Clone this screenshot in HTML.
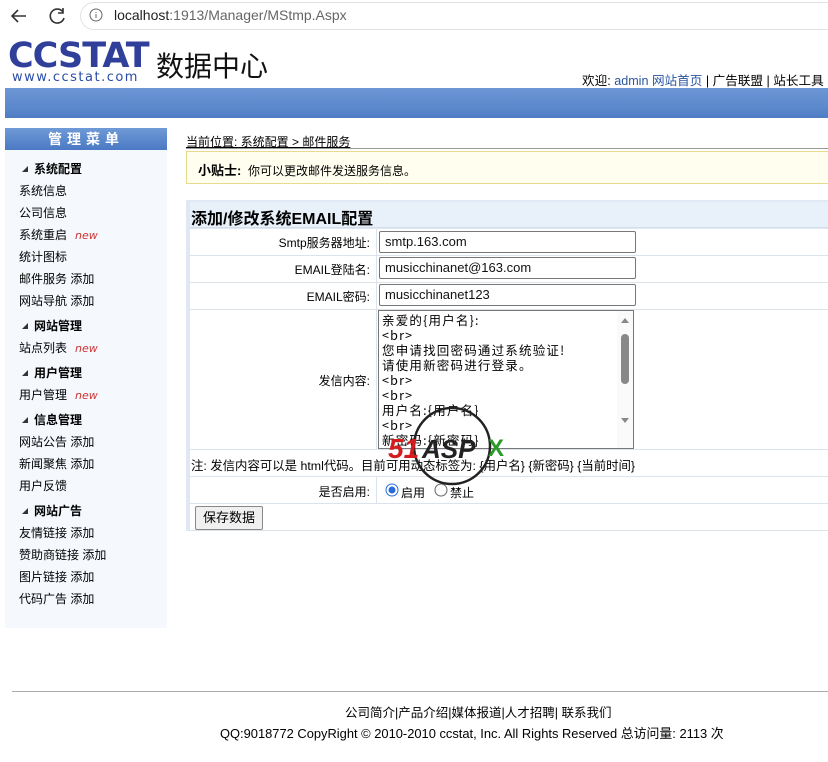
<!DOCTYPE html>
<html><head><meta charset="utf-8"><style>
*{margin:0;padding:0;box-sizing:border-box}
body{width:828px;height:762px;background:#fff;font-family:"Liberation Sans","Noto Sans CJK SC",sans-serif;font-size:12px;color:#000;position:relative;overflow:hidden}
.a{position:absolute;white-space:nowrap}
.cjk{font-family:"Noto Sans CJK SC",sans-serif}
.side div{position:absolute;left:19px;font-size:12px}
.side .h{left:22px;font-weight:bold}
.side .h:before{content:"";display:inline-block;border-left:6px solid transparent;border-bottom:6px solid #333;margin-right:6px;vertical-align:1px}
.new{color:#c33;font-style:italic;font-family:"DejaVu Sans",sans-serif;font-size:11px;margin-left:8px}
.row{position:absolute;left:190px;width:638px;border-bottom:1px solid #dde3ea;background:#fff}
.inp{position:absolute;left:379px;width:257px;height:22px;border:1px solid #777;border-radius:2px;padding-left:5px;font-size:13px;line-height:20px;color:#111}
</style></head><body>
<div class="a" style="left:0;top:0;width:828px;height:31px;background:#fff"></div>
<svg class="a" style="left:9px;top:6px" width="60" height="20" viewBox="0 0 60 20"><path d="M17 10H3M9 4L3 10l6 6" fill="none" stroke="#333" stroke-width="1.6"/><path d="M54 6a7 7 0 1 0 1 6M54 2v5h-5" fill="none" stroke="#333" stroke-width="1.6"/></svg>
<div class="a" style="left:80px;top:2px;width:760px;height:28px;border-radius:14px;background:#fff;border:1px solid #e2e2e2"></div>
<svg class="a" style="left:89px;top:8px" width="14" height="14"><circle cx="7" cy="7" r="6" fill="none" stroke="#666"/><path d="M7 6v4M7 4v1" stroke="#666"/></svg>
<div class="a" style="left:114px;top:7px;font-size:14px;color:#222">localhost<span style="color:#666">:1913/Manager/MStmp.Aspx</span></div>
<div class="a" style="left:8px;top:36px;font-family:'DejaVu Sans';font-weight:bold;font-size:35px;letter-spacing:-1px;color:#2f3f9a;line-height:40px">CCSTAT</div>
<div class="a" style="left:12px;top:70px;font-family:'DejaVu Sans';font-size:13px;letter-spacing:1.5px;color:#2a4ba8">www.ccstat.com</div>
<div class="a cjk" style="left:156px;top:47px;font-size:28px;color:#111;line-height:36px">数据中心</div>
<div class="a" style="left:582px;top:70px;font-size:12.6px">欢迎: <span style="color:#2a56a0">admin 网站首页</span> | 广告联盟 | 站长工具</div>
<div class="a" style="left:5px;top:88px;width:823px;height:30px;background:linear-gradient(#6c96d4,#5b87cc 70%,#4e7bc2)"></div>
<div class="a side" style="left:5px;top:128px;width:162px;height:500px;background:#f5f9fe">
<div style="left:0;top:0;width:162px;height:22px;background:linear-gradient(#6f9ad6,#4b79c4);color:#fff;font-weight:bold;font-size:14px;text-align:center;letter-spacing:5px;line-height:22px">管理菜单</div>
</div>
<div class="side">
<div class="h" style="top:160px">系统配置</div>
<div style="top:182px">系统信息</div>
<div style="top:204px">公司信息</div>
<div style="top:226px">系统重启<span class="new">new</span></div>
<div style="top:248px">统计图标</div>
<div style="top:270px">邮件服务 添加</div>
<div style="top:292px">网站导航 添加</div>
<div class="h" style="top:317px">网站管理</div>
<div style="top:339px">站点列表<span class="new">new</span></div>
<div class="h" style="top:364px">用户管理</div>
<div style="top:386px">用户管理<span class="new">new</span></div>
<div class="h" style="top:411px">信息管理</div>
<div style="top:433px">网站公告 添加</div>
<div style="top:455px">新闻聚焦 添加</div>
<div style="top:477px">用户反馈</div>
<div class="h" style="top:502px">网站广告</div>
<div style="top:524px">友情链接 添加</div>
<div style="top:546px">赞助商链接 添加</div>
<div style="top:568px">图片链接 添加</div>
<div style="top:590px">代码广告 添加</div>
</div>
<div class="a" style="left:186px;top:133px;text-decoration:underline">当前位置: 系统配置 &gt; 邮件服务</div>
<div class="a" style="left:186px;top:148px;width:642px;height:1px;background:#999"></div>
<div class="a" style="left:186px;top:151px;width:642px;height:33px;background:#fffeef;border:1px solid #e8dc8c;border-right:none"></div>
<div class="a" style="left:198px;top:160px"><b style="font-size:13px">小贴士:</b>&nbsp;&nbsp;你可以更改邮件发送服务信息。</div>
<div class="a" style="left:186px;top:200px;width:642px;height:331px;background:#dfe8f4"></div>
<div class="a" style="left:190px;top:202px;width:638px;height:26px;background:#e8f0fa;border-bottom:1px solid #d4dde8"></div>
<div class="a" style="left:191px;top:205px;font-size:16px;font-weight:bold">添加/修改系统EMAIL配置</div>
<div class="row" style="top:229px;height:27px"></div>
<div class="row" style="top:256px;height:27px"></div>
<div class="row" style="top:283px;height:27px"></div>
<div class="row" style="top:310px;height:140px"></div>
<div class="row" style="top:450px;height:27px"></div>
<div class="row" style="top:477px;height:27px"></div>
<div class="row" style="top:504px;height:27px"></div>
<div class="a" style="left:376px;top:229px;width:1px;height:221px;background:#dde3ea"></div>
<div class="a" style="left:376px;top:477px;width:1px;height:27px;background:#dde3ea"></div>
<div class="a" style="right:458px;top:234px">Smtp服务器地址:</div>
<div class="a" style="right:458px;top:261px">EMAIL登陆名:</div>
<div class="a" style="right:458px;top:288px">EMAIL密码:</div>
<div class="a" style="right:458px;top:372px">发信内容:</div>
<div class="a" style="right:458px;top:483px">是否启用:</div>
<div class="inp" style="top:231px">smtp.163.com</div>
<div class="inp" style="top:257px">musicchinanet@163.com</div>
<div class="inp" style="top:284px">musicchinanet123</div>
<div class="a" style="left:378px;top:310px;width:256px;height:139px;border:1px solid #777;overflow:hidden;background:#fff">
<div style="position:absolute;left:3px;top:1px;font-family:'Noto Sans CJK SC',monospace;font-size:12.5px;line-height:15px;letter-spacing:1.2px;white-space:pre">亲爱的{用户名}:
&lt;br&gt;
您申请找回密码通过系统验证!
请使用新密码进行登录。
&lt;br&gt;
&lt;br&gt;
用户名:{用户名}
&lt;br&gt;
新密码:{新密码}</div>
<div style="position:absolute;right:0;top:0;width:16px;height:139px;background:#fafafa"></div>
<div style="position:absolute;right:4px;top:7px;border:4px solid transparent;border-bottom:5px solid #888;border-top:none"></div>
<div style="position:absolute;right:4px;top:23px;width:8px;height:50px;border-radius:4px;background:#888"></div>
<div style="position:absolute;right:4px;top:107px;border:4px solid transparent;border-top:5px solid #888;border-bottom:none"></div>
</div>
<div class="a" style="left:191px;top:456px;font-size:12.4px">注: 发信内容可以是 html代码。目前可用动态标签为: {用户名} {新密码} {当前时间}</div>
<svg class="a" style="left:385px;top:483px" width="90" height="16"><circle cx="7" cy="7" r="6" fill="#fff" stroke="#2a6ad8"/><circle cx="7" cy="7" r="3.5" fill="#2a6ad8"/><circle cx="56" cy="7" r="6" fill="#fff" stroke="#666"/></svg>
<div class="a" style="left:401px;top:484px">启用</div>
<div class="a" style="left:450px;top:484px">禁止</div>
<div class="a" style="left:195px;top:506px;width:68px;height:24px;border:1px solid #888;background:#f0f0f0;border-radius:2px;text-align:center;line-height:22px;font-size:13px">保存数据</div>
<svg class="a" style="left:388px;top:402px" width="130" height="90"><circle cx="64" cy="44" r="38" fill="none" stroke="#222" stroke-width="2.5"/><text x="0" y="56" font-family="Liberation Sans" font-weight="bold" font-style="italic" font-size="28" fill="#d41c1c">51</text><text x="34" y="56" font-family="Liberation Sans" font-weight="bold" font-style="italic" font-size="26" fill="#222">ASP</text><text x="100" y="54" font-family="Liberation Sans" font-weight="bold" font-size="24" fill="#2a9a2a">X</text></svg>
<div class="a" style="left:12px;top:691px;width:816px;height:1px;background:#aaa"></div>
<div class="a" style="left:345px;top:702px;font-size:12.5px">公司简介|产品介绍|媒体报道|人才招聘| 联系我们</div>
<div class="a" style="left:220px;top:723px;font-size:12.9px">QQ:9018772 CopyRight © 2010-2010 ccstat, Inc. All Rights Reserved 总访问量: 2113 次</div>
</body></html>
